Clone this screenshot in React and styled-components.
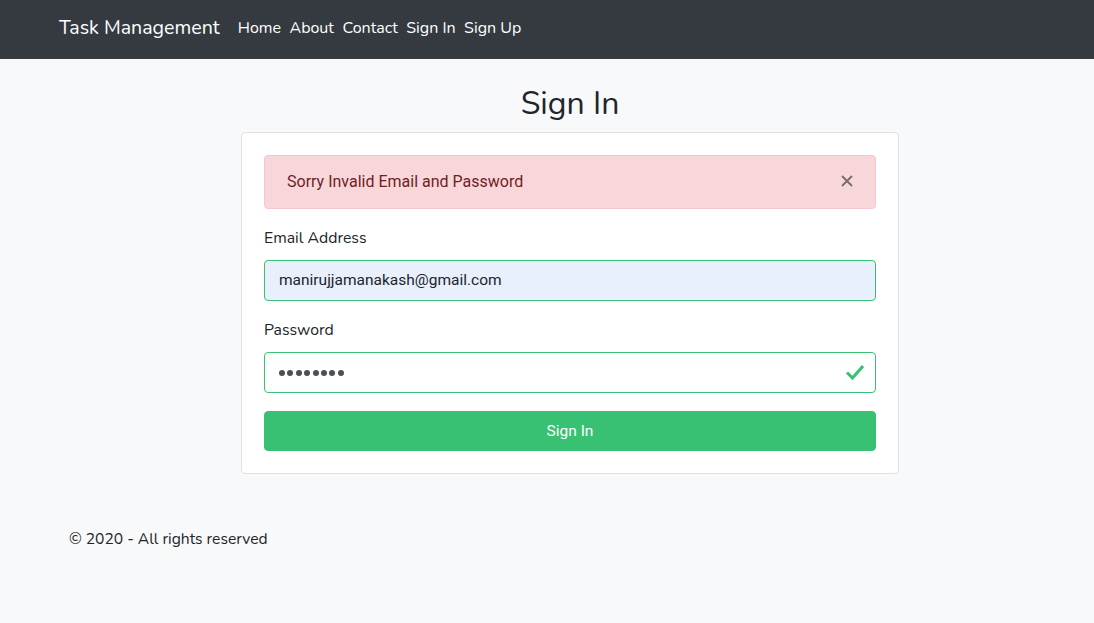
import React from "react";
import styled, { createGlobalStyle } from "styled-components";

const Global = createGlobalStyle`
  * { box-sizing: border-box; }
  html, body { margin: 0; padding: 0; }
  body {
    background: #f8f9fa;
    font-family: "Nunito", "Lato", "Noto Sans", sans-serif;
    color: #212529;
    font-size: 15.8px;
  }
`;

const Navbar = styled.nav`
  height: 59px;
  background: #343a40;
  display: flex;
  align-items: center;
  padding-left: 59px;
  padding-bottom: 4px;
`;

const Brand = styled.a`
  color: #fff;
  font-size: 19.6px;
  margin-right: 18px;
  text-decoration: none;
`;

const NavLinks = styled.div`
  display: flex;
  gap: 8.5px;
`;

const NavLink = styled.a`
  color: #fff;
  font-size: 16px;
  text-decoration: none;
`;

const Main = styled.main`
  display: flex;
  flex-direction: column;
  align-items: center;
  padding-top: 26px;
  padding-left: 46px;
`;

const Title = styled.h2`
  margin: 0 0 9px;
  font-weight: 400;
  font-size: 32px;
  line-height: 38px;
`;

const Card = styled.div`
  width: 658px;
  background: #fff;
  border: 1px solid #dfe1e4;
  border-radius: 4px;
  padding: 22px;
`;

const Alert = styled.div`
  display: flex;
  align-items: center;
  justify-content: space-between;
  height: 54px;
  background: #f8d7da;
  border: 1px solid #f5c6cb;
  border-radius: 4px;
  padding: 0 22px 2px;
  color: #721c24;
  font-family: "Roboto", "Liberation Sans", sans-serif;
  font-size: 16px;
  margin-bottom: 20px;
`;

const Close = styled.span`
  display: flex;
  opacity: 0.5;
`;

const Label = styled.label`
  display: block;
  font-size: 15.8px;
  line-height: 18px;
  margin-bottom: 13px;
`;

const Group = styled.div`
  margin-bottom: ${(p) => p.$mb}px;
`;

const InputBox = styled.div`
  height: 41px;
  border: 1px solid #38c172;
  border-radius: 4px;
  background: ${(p) => (p.$autofill ? "#e8f0fe" : "#fff")};
  display: flex;
  align-items: center;
  justify-content: space-between;
  padding: 0 10px 1px 14px;
  font-family: "Roboto", "Liberation Sans", sans-serif;
  font-size: 15.5px;
  color: #212529;
`;

const Dots = styled.span`
  display: flex;
  gap: 2.4px;
  padding-top: 1px;
`;

const Dot = styled.span`
  width: 6px;
  height: 6px;
  border-radius: 50%;
  background: #495057;
`;

const Button = styled.button`
  display: block;
  width: 100%;
  height: 40px;
  background: #38c172;
  border: 1px solid #38c172;
  border-radius: 4px;
  color: #fff;
  font-family: "Roboto", "Liberation Sans", sans-serif;
  font-size: 15.5px;
  padding-bottom: 2px;
`;

const Footer = styled.footer`
  padding: 54px 0 0 69px;
  font-size: 15.6px;
`;

export default function App() {
  return (
    <>
      <Global />
      <Navbar>
        <Brand>Task Management</Brand>
        <NavLinks>
          <NavLink>Home</NavLink>
          <NavLink>About</NavLink>
          <NavLink>Contact</NavLink>
          <NavLink>Sign In</NavLink>
          <NavLink>Sign Up</NavLink>
        </NavLinks>
      </Navbar>
      <Main>
        <Title>Sign In</Title>
        <Card>
          <Alert>
            <span>Sorry Invalid Email and Password</span>
            <Close>
              <svg width="12" height="12" viewBox="0 0 12 12">
                <path d="M1 1L11 11M11 1L1 11" stroke="#000" strokeWidth="1.8" />
              </svg>
            </Close>
          </Alert>
          <Group $mb={20}>
            <Label>Email Address</Label>
            <InputBox $autofill>manirujjamanakash@gmail.com</InputBox>
          </Group>
          <Group $mb={18}>
            <Label>Password</Label>
            <InputBox>
              <Dots>
                {Array.from({ length: 8 }).map((_, i) => (
                  <Dot key={i} />
                ))}
              </Dots>
              <svg width="20" height="18" viewBox="0 0 20 18">
                <path d="M2 9.5L7.5 15L18 3" stroke="#38c172" strokeWidth="3" fill="none" />
              </svg>
            </InputBox>
          </Group>
          <Button>Sign In</Button>
        </Card>
      </Main>
      <Footer>© 2020 - All rights reserved</Footer>
    </>
  );
}
